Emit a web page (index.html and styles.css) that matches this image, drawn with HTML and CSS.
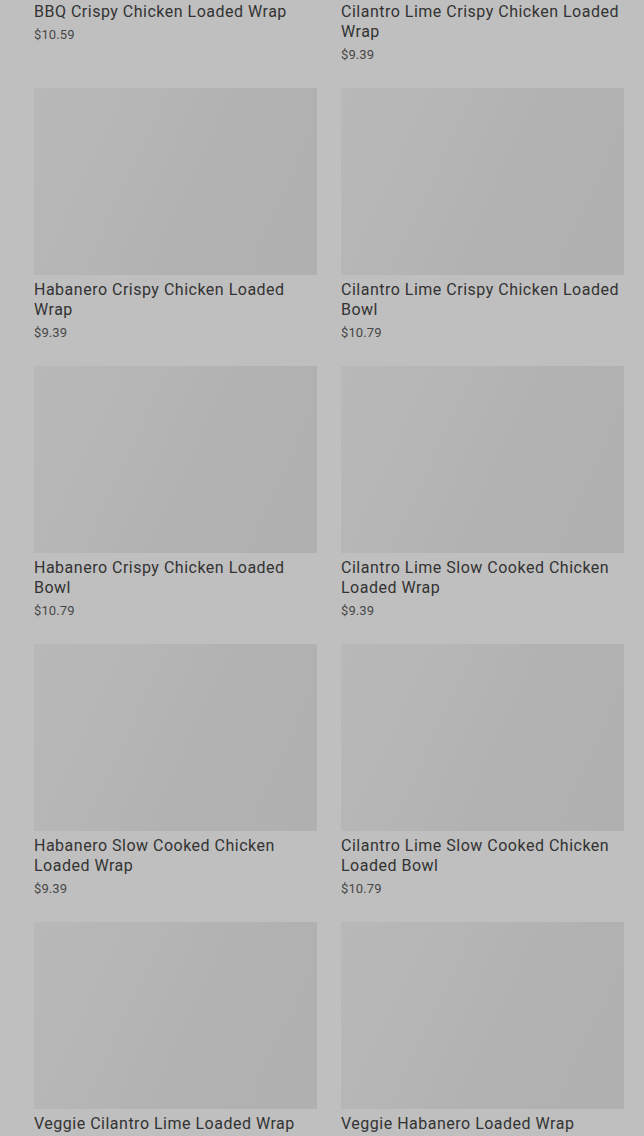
FILE: index.html
```html
<!DOCTYPE html>
<html lang="en">
<head>
<meta charset="utf-8">
<title>Loaded Wraps &amp; Bowls</title>
<link rel="stylesheet" href="styles.css">
</head>
<body>
<main class="page">
  <div class="grid">
    <a class="card"><div class="thumb"></div><h3 class="name">BBQ Crispy Chicken Loaded Wrap</h3><p class="price">$10.59</p></a>
    <a class="card"><div class="thumb"></div><h3 class="name">Cilantro Lime Crispy Chicken Loaded Wrap</h3><p class="price">$9.39</p></a>
    <a class="card"><div class="thumb"></div><h3 class="name">Habanero Crispy Chicken Loaded Wrap</h3><p class="price">$9.39</p></a>
    <a class="card"><div class="thumb"></div><h3 class="name">Cilantro Lime Crispy Chicken Loaded Bowl</h3><p class="price">$10.79</p></a>
    <a class="card"><div class="thumb"></div><h3 class="name">Habanero Crispy Chicken Loaded Bowl</h3><p class="price">$10.79</p></a>
    <a class="card"><div class="thumb"></div><h3 class="name">Cilantro Lime Slow Cooked Chicken Loaded Wrap</h3><p class="price">$9.39</p></a>
    <a class="card"><div class="thumb"></div><h3 class="name">Habanero Slow Cooked Chicken Loaded Wrap</h3><p class="price">$9.39</p></a>
    <a class="card"><div class="thumb"></div><h3 class="name">Cilantro Lime Slow Cooked Chicken Loaded Bowl</h3><p class="price">$10.79</p></a>
    <a class="card"><div class="thumb"></div><h3 class="name">Veggie Cilantro Lime Loaded Wrap</h3><p class="price">$8.99</p></a>
    <a class="card"><div class="thumb"></div><h3 class="name">Veggie Habanero Loaded Wrap</h3><p class="price">$8.99</p></a>
  </div>
</main>
</body>
</html>
```
FILE: styles.css
```css
html, body {
  margin: 0;
  padding: 0;
  background: #bfbfbf;
  overflow: hidden;
}
.page {
  padding: 0 20px 0 34px;
  font-family: Roboto, "Liberation Sans", sans-serif;
}
.grid {
  margin-top: -190px;
  display: grid;
  grid-template-columns: 283px 283px;
  column-gap: 24px;
  row-gap: 23px;
}
.card {
  display: flex;
  flex-direction: column;
  color: #3a3a3a;
  text-decoration: none;
}
.thumb {
  height: 187px;
  background: linear-gradient(115deg, #b8b8b8 0%, #b6b6b6 30%, #b2b2b2 55%, #b0b0b0 100%);
}
.name {
  margin: 5px 0 0;
  font-size: 16px;
  line-height: 20px;
  font-weight: 400;
  letter-spacing: 0.5px;
  color: #333;
}
.price {
  margin: 3px 0 0;
  font-size: 13px;
  line-height: 20px;
  letter-spacing: 0.1px;
  color: #474747;
}
```
